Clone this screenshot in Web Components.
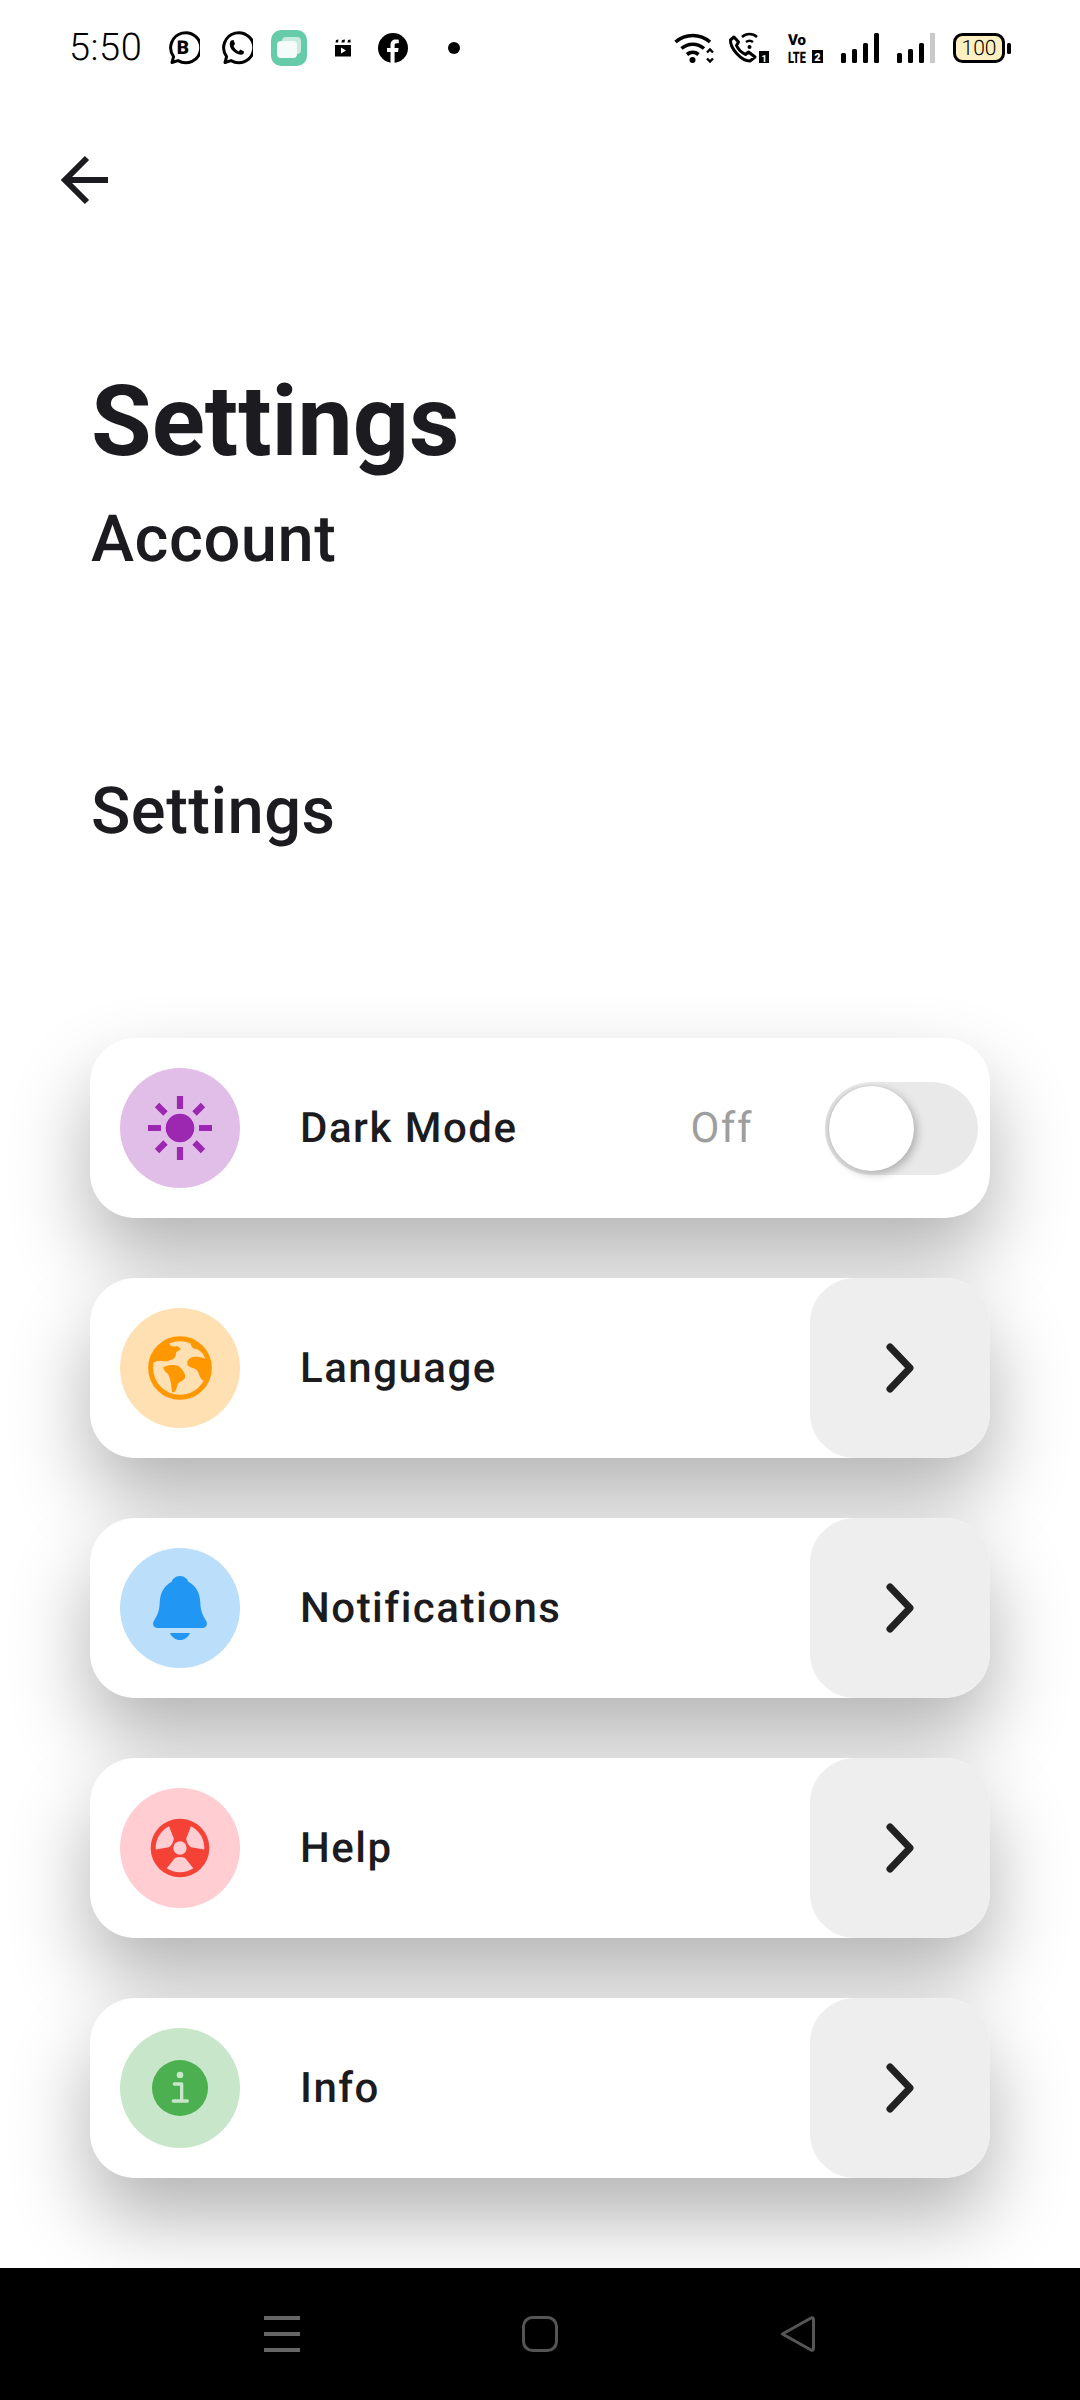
<!DOCTYPE html>
<html lang="en">
<head>
<meta charset="utf-8">
<title>Settings</title>
<style>
  html, body { margin: 0; padding: 0; background: #fff; }
  body {
    width: 1080px;
    height: 2400px;
    overflow: hidden;
    display: flex;
    flex-direction: column;
    font-family: Roboto, "Liberation Sans", sans-serif;
    color: #1c1b20;
    text-rendering: geometricPrecision;
  }
</style>
</head>
<body>
<status-bar></status-bar>
<back-button></back-button>
<page-heading title="Settings" account="Account" section="Settings"></page-heading>

<settings-list>
  <settings-row tint="#e1bee7">
    <svg slot="icon" width="66" height="66" viewBox="-33 -33 66 66" fill="#9c27b0">
      <circle r="14.3"/>
      <g stroke="#9c27b0" stroke-width="6.2">
        <path d="M0-32V-19M0 32V19M-32 0H-19M32 0H19M-23-23L-14.5-14.5M23-23L14.5-14.5M-23 23L-14.5 14.5M23 23L14.5 14.5"/>
      </g>
    </svg>
    Dark Mode
    <toggle-switch slot="trailing" state="Off"></toggle-switch>
  </settings-row>

  <settings-row tint="#ffe0b2">
    <svg slot="icon" width="80" height="80" viewBox="0 0 240 240" fill="#ff9800">
      <circle cx="120" cy="120" r="88" fill="none" stroke="#ff9800" stroke-width="15"/>
      <path d="M32 110C40 70 65 40 105 28L125 32L92 40C84 48 92 60 112 54L122 62C118 72 108 66 108 78C104 100 92 92 84 100L70 100C58 96 44 100 32 110Z"/>
      <path d="M70 118C84 110 102 110 114 113C126 122 138 136 135 150C127 162 116 160 112 172C108 186 106 196 96 192C94 172 92 152 84 138C76 132 70 126 70 118Z"/>
      <path d="M142 100C150 82 178 84 196 92L212 100L212 130L196 158C186 160 180 150 176 136C172 118 150 122 142 110Z"/>
      <path d="M150 36L170 44L160 50C170 52 182 62 192 76C180 72 176 62 164 62C156 62 150 48 150 36Z"/>
    </svg>
    Language
    <chevron-tile slot="trailing"></chevron-tile>
  </settings-row>

  <settings-row tint="#bbdefb">
    <svg slot="icon" width="54" height="64" viewBox="249 228 162 192" fill="#2196f3">
      <path d="M330 228C345 228 352 238 355 245C375 255 390 275 391 310C392 335 400 350 408 362C414 372 410 384 398 384L262 384C250 384 246 372 252 362C260 350 268 335 269 310C270 275 285 255 305 245C308 238 315 228 330 228Z"/>
      <path d="M300 399L360 399C355 412 343 420 330 420C317 420 305 412 300 399Z"/>
    </svg>
    Notifications
    <chevron-tile slot="trailing"></chevron-tile>
  </settings-row>

  <settings-row tint="#ffcdd2">
    <svg slot="icon" width="60" height="60" viewBox="-90 -90 180 180">
      <circle r="88" fill="#f44336"/>
      <circle r="20" fill="#ffcdd2"/>
      <g fill="#ffcdd2">
        <path d="M-15 30L-40 61A73 73 0 0 0 40 61L15 30Q0 24 -15 30Z"/>
        <path d="M-15 30L-40 61A73 73 0 0 0 40 61L15 30Q0 24 -15 30Z" transform="rotate(120)"/>
        <path d="M-15 30L-40 61A73 73 0 0 0 40 61L15 30Q0 24 -15 30Z" transform="rotate(-120)"/>
      </g>
    </svg>
    Help
    <chevron-tile slot="trailing"></chevron-tile>
  </settings-row>

  <settings-row tint="#c8e6c9">
    <svg slot="icon" width="56" height="56" viewBox="-84 -84 168 168">
      <circle r="84" fill="#4caf50"/>
      <circle cy="-39" r="10" fill="#c8e6c9"/>
      <path d="M-17-12H5V38M-20 39H22" fill="none" stroke="#c8e6c9" stroke-width="10" stroke-linecap="round" stroke-linejoin="round"/>
    </svg>
    Info
    <chevron-tile slot="trailing"></chevron-tile>
  </settings-row>
</settings-list>

<nav-bar></nav-bar>

<script>
class StatusBar extends HTMLElement {
  connectedCallback() {
    this.attachShadow({ mode: 'open' });
    this.shadowRoot.innerHTML = `
      <style>
        :host {
          display: flex;
          align-items: center;
          height: 64px;
          padding: 16px 69px 0 69px;
          color: #000;
        }
        svg { display: block; flex: none; }
        .time {
          font: 300 38px Roboto, sans-serif;
          letter-spacing: 0.5px;
          width: 96.500px;
        }
        .left, .right { display: flex; align-items: center; }
        .right { margin-left: auto; }
        text { font-family: Roboto, sans-serif; }
      </style>
      <span class="time">5:50</span>
      <div class="left">
        <svg width="34" height="34" viewBox="0 0 34 34" fill="none" stroke="#000" stroke-width="3">
          <path d="M6 31.5L7.6 25.6A15 15 0 1 1 12 29.6Z" stroke-linejoin="round"/>
          <text x="17" y="23" text-anchor="middle" font-size="19" font-weight="900" fill="#000" stroke="none">B</text>
        </svg>
        <svg style="margin-left:19.500px" width="34" height="34" viewBox="0 0 34 34" fill="none" stroke="#000" stroke-width="3">
          <path d="M6 31.5L7.6 25.6A15 15 0 1 1 12 29.6Z" stroke-linejoin="round"/>
          <path d="M12 9.5L14.5 9L16 13L14.5 15C15.5 17.5 17.5 19.5 19.5 20.5L21.5 18.5L25 20.5L24.5 23C21 25 16 22.5 13 19C10.5 16 10 12 12 9.5Z" fill="#000" stroke="none"/>
        </svg>
        <svg style="margin-left:18px" width="36" height="36" viewBox="0 0 36 36">
          <rect width="36" height="36" rx="10" fill="#66cba8"/>
          <rect x="11" y="7" width="19" height="17" rx="4" fill="#c7ebdf"/>
          <rect x="6" y="11" width="20" height="17" rx="4" fill="#f4fbf8"/>
        </svg>
        <svg style="margin-left:26.500px" width="18" height="18" viewBox="0 0 18 18">
          <path d="M1 6H17V17.500H1Z" fill="#000"/>
          <path d="M1.500 3.500L2 1L4.500 .5L4 3.500ZM7.500 3.500L8 1L11 .5L10.500 3.500ZM13.500 3.500L14 1L16.500 .5L16.500 3.500Z" fill="#000"/>
          <path d="M7 8.500L12 11.500L7 14.500Z" fill="#fff"/>
        </svg>
        <svg style="margin-left:26.500px" width="30" height="30" viewBox="0 0 30 30">
          <circle cx="15" cy="15" r="15" fill="#000"/>
          <path d="M12.500 30V19H9V15H12.500V11.800C12.500 8.300 14.600 6.400 17.800 6.400C19.300 6.400 20.400 6.600 20.800 6.700V10.200H18.700C17 10.200 16.600 11 16.600 12.200V15H20.600L20 19H16.600V30Z" fill="#fff"/>
        </svg>
        <svg style="margin-left:39.500px" width="12" height="12" viewBox="0 0 12 12"><circle cx="6" cy="6" r="6" fill="#000"/></svg>
      </div>
      <div class="right">
        <svg width="40" height="32" viewBox="0 0 40 32" fill="none" stroke="#000" stroke-width="3.600">
          <path d="M1.500 10A26 26 0 0 1 36 10M7.500 16.500A17 17 0 0 1 30 16.500M13 22.500A9 9 0 0 1 24.500 22.500"/>
          <circle cx="18.500" cy="28" r="3" fill="#000" stroke="none"/>
          <path d="M33 20.500L36 17.500L39 20.500M33 26.500L36 29.500L39 26.500" stroke-width="2.400"/>
        </svg>
        <svg style="margin-left:14px" width="42" height="32" viewBox="0 0 42 32">
          <path d="M6 5L10.500 10L8.500 13.500C10 17 13.500 20.500 17.500 22.500L20.500 20L27 25L22 29C13 29 2 16 2.500 8Z" fill="none" stroke="#000" stroke-width="3" stroke-linejoin="round"/>
          <path d="M14 5A11 11 0 0 1 29 5M18 10A6 6 0 0 1 25 10" fill="none" stroke="#000" stroke-width="2.400"/>
          <circle cx="21.500" cy="15" r="2" fill="#000"/>
          <rect x="31" y="19" width="10" height="12" fill="#000"/>
          <text x="36" y="29.500" text-anchor="middle" font-size="10" font-weight="700" fill="#fff">1</text>
        </svg>
        <svg style="margin-left:17px" width="36" height="40" viewBox="0 0 36 40">
          <text x="1" y="17" font-size="15" font-weight="900" fill="#000">Vo</text>
          <text transform="translate(1 35) scale(.68 1)" font-size="16" font-weight="900" fill="#000">LTE</text>
          <rect x="25" y="22" width="11" height="13" fill="#000"/>
          <text x="30.500" y="33" text-anchor="middle" font-size="11" font-weight="900" fill="#fff">2</text>
        </svg>
        <svg style="margin-left:18px" width="39" height="30" viewBox="0 0 39 30" fill="#000">
          <rect x="0" y="20" width="5" height="10" rx="1.500"/>
          <rect x="11" y="16" width="5" height="14" rx="1.500"/>
          <rect x="22" y="10" width="5" height="20" rx="1.500"/>
          <rect x="33" y="0" width="5" height="30" rx="1.500"/>
        </svg>
        <svg style="margin-left:17px" width="39" height="30" viewBox="0 0 39 30" fill="#000">
          <rect x="0" y="20" width="5" height="10" rx="1.500"/>
          <rect x="11" y="16" width="5" height="14" rx="1.500"/>
          <rect x="22" y="10" width="5" height="20" rx="1.500"/>
          <rect x="33" y="0" width="5" height="30" fill="#c9c9c9"/>
        </svg>
        <svg style="margin-left:17px" width="58" height="30" viewBox="0 0 58 30">
          <rect x="1.500" y="1.500" width="49" height="27" rx="8" fill="#fdf0c0" stroke="#000" stroke-width="3"/>
          <rect x="54" y="10" width="4" height="11" rx="1.500" fill="#000"/>
          <text x="26" y="22" text-anchor="middle" font-size="21" font-weight="300" fill="#000">100</text>
        </svg>
      </div>
    `;
  }
}

class BackButton extends HTMLElement {
  connectedCallback() {
    this.attachShadow({ mode: 'open' });
    this.shadowRoot.innerHTML = `
      <style>
        :host { display: block; padding: 75px 0 0 58px; height: 50px; }
        svg { display: block; }
      </style>
      <svg width="52" height="50" viewBox="0 0 52 50" fill="none" stroke="#1c1b20" stroke-width="6">
        <path d="M50 25H7M29 3L7 25L29 47"/>
      </svg>
    `;
  }
}

class PageHeading extends HTMLElement {
  connectedCallback() {
    this.attachShadow({ mode: 'open' });
    this.shadowRoot.innerHTML = `
      <style>
        :host { display: block; padding: 162px 0 0 91px; }
        h1, h2, h3 { margin: 0; font-family: Roboto, sans-serif; color: #1c1b20; }
        h1 { font-size: 98.500px; font-weight: 700; line-height: 112px; }
        h2, h3 { font-size: 65px; font-weight: 500; line-height: 76px; letter-spacing: 0.5px; }
        h2 { margin-top: 22px; }
        h3 { margin-top: 196px; }
      </style>
      <h1>${this.getAttribute('title')}</h1>
      <h2>${this.getAttribute('account')}</h2>
      <h3>${this.getAttribute('section')}</h3>
    `;
  }
}

class SettingsList extends HTMLElement {
  connectedCallback() {
    this.attachShadow({ mode: 'open' });
    this.shadowRoot.innerHTML = `
      <style>
        :host {
          display: flex;
          flex-direction: column;
          gap: 60px;
          margin: 189px 90px 0;
        }
      </style>
      <slot></slot>
    `;
  }
}

class SettingsRow extends HTMLElement {
  connectedCallback() {
    this.attachShadow({ mode: 'open' });
    this.shadowRoot.innerHTML = `
      <style>
        :host {
          display: flex;
          align-items: center;
          height: 180px;
          padding-left: 30px;
          background: #fff;
          border-radius: 45px;
          box-shadow: 0 40px 80px rgba(0, 0, 0, 0.3);
        }
        .icon {
          width: 120px;
          height: 120px;
          flex: none;
          border-radius: 50%;
          background: ${this.getAttribute('tint')};
          display: flex;
          align-items: center;
          justify-content: center;
        }
        .label {
          margin-left: 60px;
          font: 500 42px Roboto, sans-serif;
          letter-spacing: 1.500px;
          color: #1c1b20;
        }
        ::slotted([slot="trailing"]) { margin-left: auto; }
      </style>
      <div class="icon"><slot name="icon"></slot></div>
      <span class="label"><slot></slot></span>
      <slot name="trailing"></slot>
    `;
  }
}

class ToggleSwitch extends HTMLElement {
  connectedCallback() {
    this.attachShadow({ mode: 'open' });
    this.shadowRoot.innerHTML = `
      <style>
        :host {
          display: flex;
          align-items: center;
          gap: 72px;
          margin-right: 12px;
        }
        .state {
          font: 400 42px Roboto, sans-serif;
          letter-spacing: 1.500px;
          color: #9e9e9e;
        }
        .track {
          width: 153px;
          height: 93px;
          box-sizing: border-box;
          padding: 4px;
          border-radius: 47px;
          background: linear-gradient(to right, #dcdcdc, #e9e9e9 25%);
        }
        .thumb {
          width: 85px;
          height: 85px;
          border-radius: 50%;
          background: #fff;
          box-shadow: 3px 3px 8px rgba(0, 0, 0, 0.25), -1px -1px 1px rgba(0, 0, 0, 0.06);
        }
      </style>
      <span class="state">${this.getAttribute('state')}</span>
      <div class="track"><div class="thumb"></div></div>
    `;
  }
}

class ChevronTile extends HTMLElement {
  connectedCallback() {
    this.attachShadow({ mode: 'open' });
    this.shadowRoot.innerHTML = `
      <style>
        :host {
          display: flex;
          align-items: center;
          justify-content: center;
          width: 180px;
          height: 180px;
          background: #eeeeee;
          border-radius: 45px;
        }
      </style>
      <svg width="180" height="180" viewBox="0 0 180 180" fill="none" stroke="#212121" stroke-width="7" stroke-linecap="round" stroke-linejoin="round">
        <path d="M80 69L100 90L80 111"/>
      </svg>
    `;
  }
}

class NavBar extends HTMLElement {
  connectedCallback() {
    this.attachShadow({ mode: 'open' });
    this.shadowRoot.innerHTML = `
      <style>
        :host {
          display: flex;
          align-items: center;
          gap: 222px;
          position: relative;
          margin-top: auto;
          height: 132px;
          box-sizing: border-box;
          padding: 0 0 0 264px;
          background: #000;
        }
        svg { display: block; }
      </style>
      <svg width="36" height="36" viewBox="0 0 36 36" fill="#666">
        <rect y="0" width="36" height="4"/>
        <rect y="16" width="36" height="4"/>
        <rect y="32" width="36" height="4"/>
      </svg>
      <svg width="36" height="36" viewBox="0 0 36 36" fill="none" stroke="#555" stroke-width="3">
        <rect x="1.500" y="1.500" width="33" height="33" rx="9"/>
      </svg>
      <svg width="35" height="36" viewBox="0 0 35 36" fill="none" stroke="#555" stroke-width="3" stroke-linejoin="round">
        <path d="M2.500 18L31 2Q33.500 1 33.500 4V32Q33.500 35 31 34Z"/>
      </svg>
    `;
  }
}

customElements.define('status-bar', StatusBar);
customElements.define('back-button', BackButton);
customElements.define('page-heading', PageHeading);
customElements.define('settings-list', SettingsList);
customElements.define('settings-row', SettingsRow);
customElements.define('toggle-switch', ToggleSwitch);
customElements.define('chevron-tile', ChevronTile);
customElements.define('nav-bar', NavBar);
</script>
</body>
</html>
